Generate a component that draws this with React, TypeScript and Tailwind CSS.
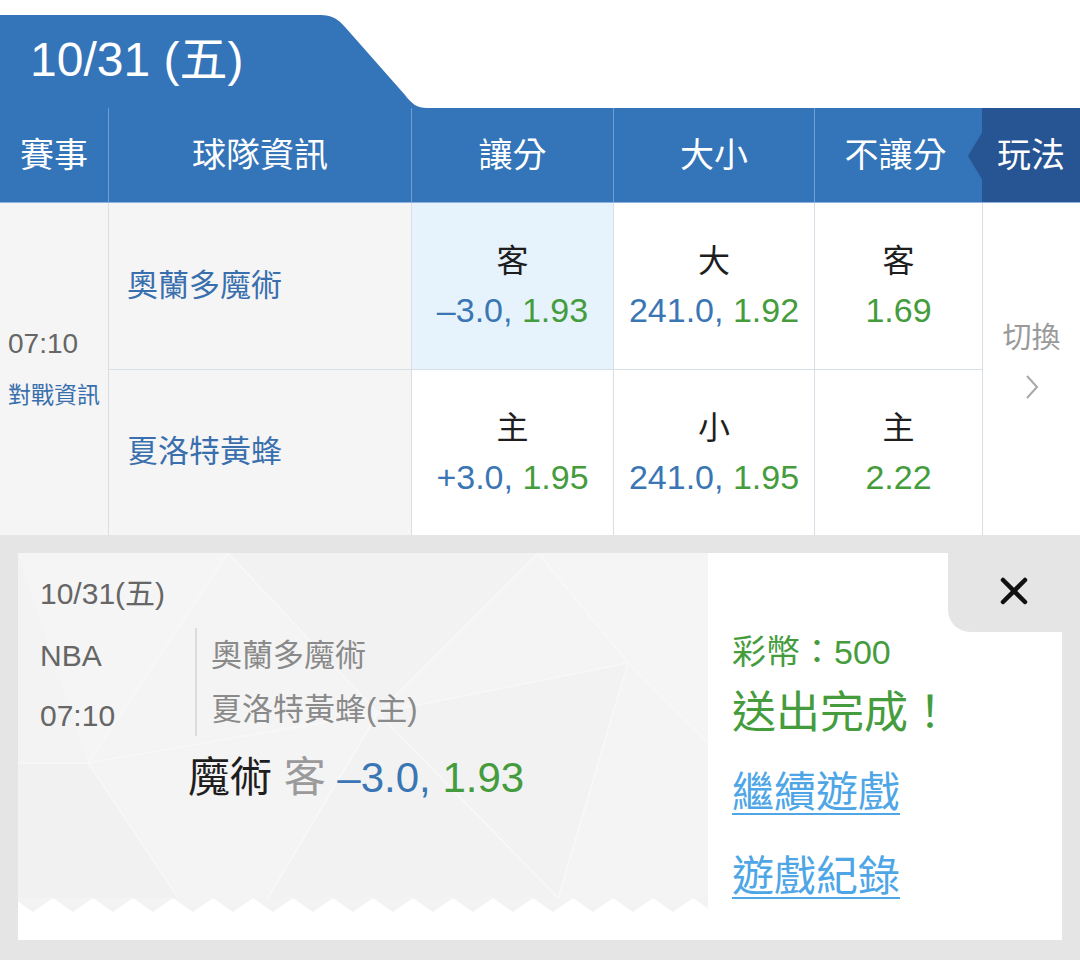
import React from "react";

const FONT = "font-['Liberation_Sans','Noto_Sans_CJK_TC',sans-serif]";

type Odd = { label: string; a?: string; b: string; hl?: boolean };

const col1: Odd[] = [
  { label: "客", a: "–3.0,", b: "1.93", hl: true },
  { label: "主", a: "+3.0,", b: "1.95" },
];
const col2: Odd[] = [
  { label: "大", a: "241.0,", b: "1.92" },
  { label: "小", a: "241.0,", b: "1.95" },
];
const col3: Odd[] = [
  { label: "客", b: "1.69" },
  { label: "主", b: "2.22" },
];

function OddCell({ o, last }: { o: Odd; last?: boolean }) {
  return (
    <div
      className={`flex-1 flex flex-col items-center justify-center ${
        o.hl ? "bg-[#e6f3fc]" : "bg-white"
      } ${last ? "" : "border-b border-[#d9dfe6]"}`}
    >
      <div className="text-[32px] leading-[40px] text-[#1e1e1e]">{o.label}</div>
      <div className="mt-[9px] text-[34px] leading-[40px] whitespace-nowrap">
        {o.a && <span className="text-[#3a76b4]">{o.a} </span>}
        <span className="text-[#459c3d]">{o.b}</span>
      </div>
    </div>
  );
}

function OddColumn({ items, w }: { items: Odd[]; w: string }) {
  return (
    <div className={`${w} flex flex-col border-l border-[#d9dfe6]`}>
      <OddCell o={items[0]} />
      <OddCell o={items[1]} last />
    </div>
  );
}

function Zigzag() {
  const pts: string[] = [];
  for (let x = -5; x <= 700; x += 40) {
    pts.push(`${x + 20},14`);
    pts.push(`${x + 40},0`);
  }
  return (
    <svg width="690" height="14" viewBox="0 0 690 14" className="block">
      <polygon points={`0,0 0,3.5 ${pts.join(" ")} 690,0`} fill="#f3f3f3" strokeLinejoin="round" />
    </svg>
  );
}

function Pattern() {
  return (
    <svg
      width="690"
      height="345"
      viewBox="0 0 690 345"
      className="absolute inset-0"
    >
      <rect width="690" height="345" fill="#f3f3f3" />
      <polygon points="0,0 210,0 70,210" fill="#f5f5f5" />
      <polygon points="210,0 520,0 360,160" fill="#f2f2f2" />
      <polygon points="520,0 690,0 690,190 610,110" fill="#f5f5f5" />
      <polygon points="0,210 70,210 160,345 0,345" fill="#f1f1f1" />
      <polygon points="70,210 360,160 250,345 160,345" fill="#f4f4f4" />
      <polygon points="360,160 610,110 540,345 250,345" fill="#f2f2f2" />
      <polygon points="610,110 690,190 690,345 540,345" fill="#f4f4f4" />
      <polygon points="210,0 360,160 70,210" fill="#f4f4f4" />
      <polygon points="360,160 520,0 610,110" fill="#f4f4f4" />
      <g stroke="#f8f8f8" strokeWidth="1.5" fill="none">
        <polyline points="70,210 210,0 360,160 520,0 610,110 690,190" />
        <polyline points="0,210 70,210 360,160 610,110" />
        <polyline points="160,345 70,210" />
        <polyline points="250,345 360,160 540,345 610,110" />
      </g>
    </svg>
  );
}

export default function App() {
  return (
    <div className={`w-[1080px] h-[960px] bg-white overflow-hidden flex flex-col ${FONT}`}>
      <div className="h-[15px] shrink-0" />
      <div className="flex h-[93px] shrink-0">
        <div className="w-[300px] bg-[#3474b8] flex items-center pl-[30px] text-white text-[48px] leading-[60px] pb-[4px]">
          10/31 (五)
        </div>
        <svg width="130" height="93" viewBox="0 0 130 93" className="block">
          <path
            d="M0,0 H20 C32,0 38,4 45,12 L105,80 C112,89 117,93 127,93 H0 Z"
            fill="#3474b8"
          />
        </svg>
      </div>
      <div className="flex h-[95px] shrink-0 bg-[#3474b8] text-white text-[34px] border-b border-[#8eb2dc]">
        <div className="w-[108px] flex items-center justify-center">賽事</div>
        <div className="w-[303px] flex items-center justify-center border-l border-[#6e9ed3]">球隊資訊</div>
        <div className="w-[202px] flex items-center justify-center border-l border-[#6e9ed3]">讓分</div>
        <div className="w-[201px] flex items-center justify-center border-l border-[#6e9ed3]">大小</div>
        <div className="w-[168px] flex items-center justify-center border-l border-[#6e9ed3] pr-[6px]">不讓分</div>
        <div className="relative w-[98px] flex items-center justify-center bg-[#275594]">
          <svg
            width="15"
            height="50"
            viewBox="0 0 15 50"
            className="absolute left-[-14px] top-[23px]"
          >
            <polygon points="15,0 0,25 15,50" fill="#275594" />
          </svg>
          玩法
        </div>
      </div>
      <div className="flex h-[332px] shrink-0">
        <div className="w-[108px] bg-[#f5f5f5] flex flex-col justify-center pl-[8px]">
          <div className="text-[28px] leading-[32px] text-[#666666]">07:10</div>
          <div className="mt-[20px] text-[23px] leading-[30px] text-[#3a6fae]">對戰資訊</div>
        </div>
        <div className="w-[303px] bg-[#f5f5f5] flex flex-col border-l border-[#d9dfe6]">
          <div className="flex-1 flex items-center pl-[18px] text-[31px] text-[#3a6fae] border-b border-[#d9dfe6]">
            奧蘭多魔術
          </div>
          <div className="flex-1 flex items-center pl-[18px] text-[31px] text-[#3a6fae]">
            夏洛特黃蜂
          </div>
        </div>
        <OddColumn items={col1} w="w-[202px]" />
        <OddColumn items={col2} w="w-[201px]" />
        <OddColumn items={col3} w="w-[168px]" />
        <div className="w-[98px] bg-white border-l border-[#d9dfe6] flex flex-col items-center pt-[117px]">
          <div className="text-[29px] leading-[36px] text-[#9a9a9a]">切換</div>
          <svg width="14" height="24" viewBox="0 0 14 24" className="mt-[19px]">
            <polyline points="2,1 12,12 2,23" fill="none" stroke="#a8a8a8" strokeWidth="2" />
          </svg>
        </div>
      </div>
      <div className="flex-1 bg-[#e5e5e5] pt-[18px] px-[18px]">
        <div className="w-[1044px] h-[387px] bg-white flex">
          <div className="w-[690px] flex flex-col">
            <div className="relative h-[345px]">
              <Pattern />
              <div className="relative pl-[22px] pt-[22px] flex flex-col">
                <div className="text-[30px] leading-[38px] text-[#666666]">10/31(五)</div>
                <div className="flex mt-[15px]">
                  <div className="w-[155px] flex flex-col pt-[8px] text-[30px] leading-[40px] text-[#666666]">
                    <div>NBA</div>
                    <div className="mt-[20px]">07:10</div>
                  </div>
                  <div className="border-l-2 border-[#dcdcdc] pl-[14px] pt-[8px] pb-[5px] flex flex-col gap-[14px] text-[31px] leading-[40px] text-[#8a8a8a]">
                    <div>奧蘭多魔術</div>
                    <div>夏洛特黃蜂(主)</div>
                  </div>
                </div>
                <div className="ml-[148px] mt-[17px] text-[42px] leading-[50px] whitespace-nowrap">
                  <span className="text-[#1e1e1e]">魔術</span>
                  <span className="text-[#9a9a9a]"> 客 </span>
                  <span className="text-[#3a76b4]">–3.0, </span>
                  <span className="text-[#459c3d]">1.93</span>
                </div>
              </div>
            </div>
            <Zigzag />
          </div>
          <div className="flex-1 flex flex-col">
            <div className="self-end w-[114px] h-[79px] bg-[#e5e5e5] rounded-bl-[22px] flex justify-end items-start pt-[24px] pr-[34px]">
              <svg width="28" height="28" viewBox="0 0 28 28">
                <line x1="3" y1="3" x2="25" y2="25" stroke="#111" strokeWidth="4.5" strokeLinecap="round" />
                <line x1="25" y1="3" x2="3" y2="25" stroke="#111" strokeWidth="4.5" strokeLinecap="round" />
              </svg>
            </div>
            <div className="pl-[24px] flex flex-col">
              <div className="text-[34px] leading-[40px] text-[#459c3d] whitespace-nowrap">彩幣：500</div>
              <div className="mt-[16px] text-[44px] leading-[50px] text-[#459c3d] whitespace-nowrap">送出完成！</div>
              <div className="mt-[30px] text-[42px] leading-[50px] text-[#4ea6e6] underline decoration-2 underline-offset-[6px]">
                繼續遊戲
              </div>
              <div className="mt-[34px] text-[42px] leading-[50px] text-[#4ea6e6] underline decoration-2 underline-offset-[6px]">
                遊戲紀錄
              </div>
            </div>
          </div>
        </div>
      </div>
    </div>
  );
}
